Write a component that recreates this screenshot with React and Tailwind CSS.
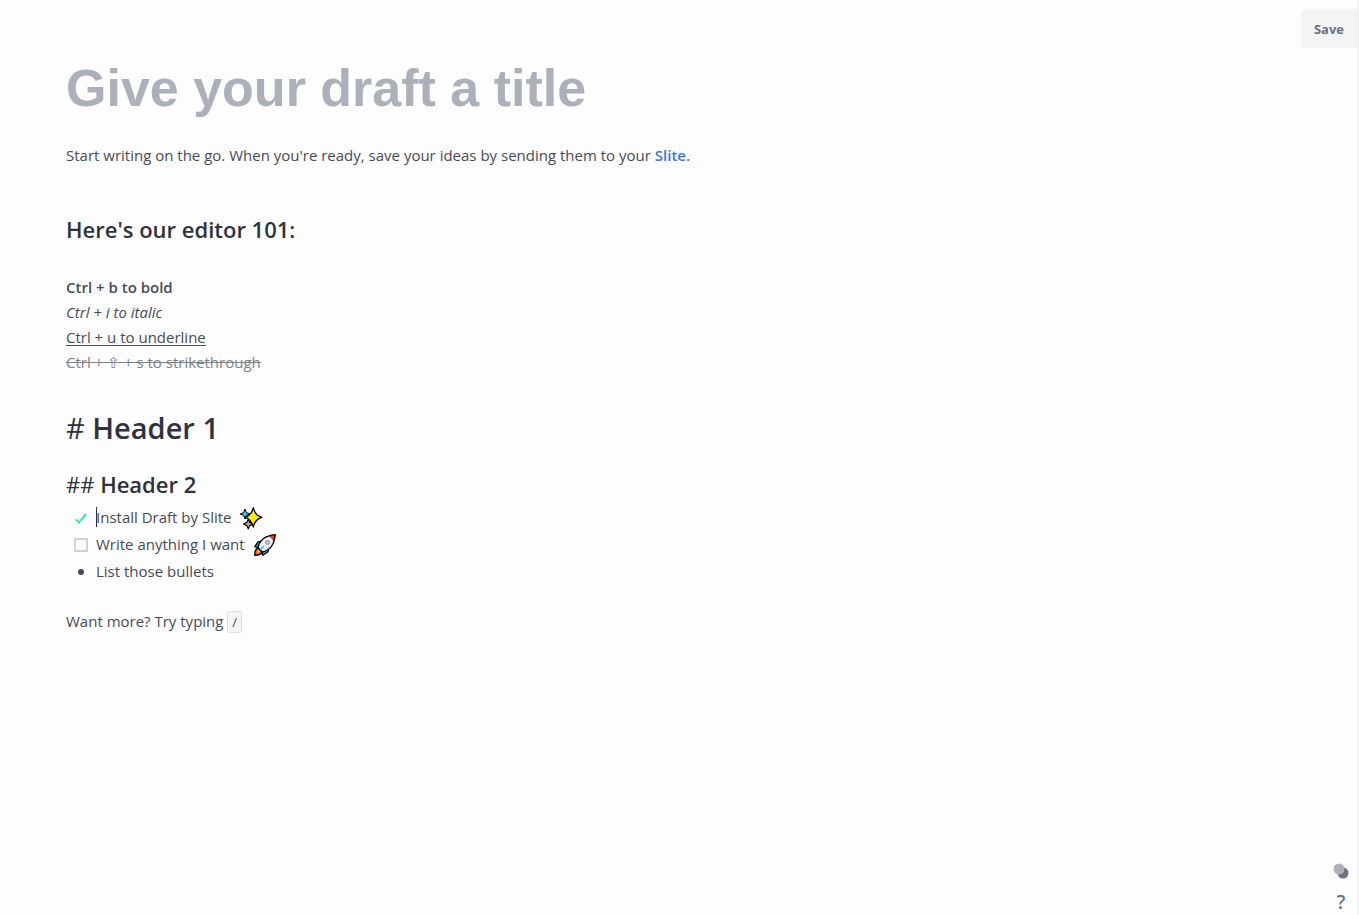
import React, { useState } from "react";

function Check() {
  return (
    <svg viewBox="0 0 14 14" className="pointer-events-none col-start-1 row-start-1 h-3.5 w-3.5" fill="none" aria-hidden="true">
      <path d="M1.8 8.4 5 11.6 12 3" stroke="#3fe0b4" strokeWidth="2" />
    </svg>
  );
}

function Sparkles() {
  return (
    <svg viewBox="0 0 24 24" className="h-6 w-6" stroke="#000" strokeLinejoin="round" aria-hidden="true">
      <path d="M6 3 7.4 6.6 11 8 7.4 9.4 6 13 4.6 9.4 1.2 8 4.6 6.6Z" fill="#38c6f0" strokeWidth="1" />
      <path d="M9.3 13.2 10.8 16.4 14 18 10.8 19.6 9.3 22.8 7.8 19.6 4.6 18 7.8 16.4Z" fill="#c9a795" strokeWidth="1.2" />
      <path d="M14.3 1.6 C15.4 7 17.6 9.9 22.8 11.3 C17.6 12.8 15.4 16 14.3 21 C13.1 16 10.8 12.8 6.2 11.3 C10.8 9.9 13.1 7 14.3 1.6Z" fill="#fff000" strokeWidth="1.3" />
    </svg>
  );
}

function Rocket() {
  return (
    <svg viewBox="0 0 24 24" className="h-6 w-6" stroke="#000" strokeWidth="1.3" strokeLinejoin="round" aria-hidden="true">
      <path d="M9.2 8.2 5 8.8 1.8 13.6 6.4 15Z" fill="#35b8df" />
      <path d="M15.8 14.8 15 18.8 9.8 22.2 8.8 17.6Z" fill="#35b8df" />
      <path d="M4.6 14.8 C2.4 16 1.7 19 1.7 22.3 C5 22.3 8 21.5 9.2 19.4Z" fill="#e54b22" />
      <path d="M5 16.5 3.5 20.5 7.5 19Z" fill="#ffd83b" stroke="none" />
      <path d="M5 14.6 C6.5 7.5 12 2.7 22.3 1.7 C21.3 12 16.6 17.5 9.4 19Z" fill="#e6edf2" stroke="none" />
      <path d="M14.8 3.3 C17.2 2.3 20 1.9 22.3 1.7 C22.1 4 21.7 7 20.7 9.2 C19.8 6.5 17.8 4.2 14.8 3.3Z" fill="#e23d22" stroke="none" />
      <path d="M5 14.6 C6.5 7.5 12 2.7 22.3 1.7 C21.3 12 16.6 17.5 9.4 19Z" fill="none" />
      <circle cx="14.5" cy="9.5" r="2" fill="#b9c4cb" stroke="#87939b" strokeWidth="1" />
      <path d="M7 17 11 13" stroke="#35b8df" />
    </svg>
  );
}

function Todo({ id, text, checked, onChange, caret, children }) {
  return (
    <li className="flex h-[27px] items-center">
      <span className="grid w-[30px] place-items-center">
        <input
          id={id}
          type="checkbox"
          checked={checked}
          onChange={onChange}
          className="col-start-1 row-start-1 h-3.5 w-3.5 appearance-none border-2 border-[#d0d3d8] checked:border-transparent"
        />
        {checked && <Check />}
      </span>
      <label htmlFor={id} className="relative flex items-center gap-2">
        {caret && <span className="absolute left-0 top-0.5 h-5 w-px bg-[#2f323c]" />}
        <span>{text}</span>
        {children}
      </label>
    </li>
  );
}

export default function App() {
  const [title, setTitle] = useState("");
  const [done, setDone] = useState({ install: true, write: false });
  const toggle = (key) => () => setDone((d) => ({ ...d, [key]: !d[key] }));

  return (
    <div className="flex min-h-screen border-r-2 border-[#f0f1f2] bg-[#fdfdfd] font-['Open_Sans','Noto_Sans',sans-serif] text-[15px] leading-[25px] text-[#484b55]">
      <main className="min-w-0 flex-1 pb-12 pl-[66px] pt-14">
        <input
          type="text"
          aria-label="Draft title"
          placeholder="Give your draft a title"
          value={title}
          onChange={(e) => setTitle(e.target.value)}
          className="block h-16 w-full bg-transparent font-['Liberation_Sans',Arial,sans-serif] text-[52px] font-bold text-[#2f323c] outline-none placeholder:text-[#abb0ba]"
        />
        <p className="mt-[23px]">
          Start writing on the go. When you're ready, save your ideas by sending them to your{" "}
          <a href="#slite" className="font-semibold text-[#3478ea]">Slite.</a>
        </p>
        <h2 className="mt-[45px] text-[22px] font-semibold leading-8 text-[#2f323c]">Here's our editor 101:</h2>
        <div className="mt-[30px]">
          <p><strong className="font-semibold">Ctrl + b to bold</strong></p>
          <p><em>Ctrl + i to italic</em></p>
          <p><u className="underline-offset-2">Ctrl + u to underline</u></p>
          <p className="text-[#7c828e]"><s>Ctrl + ⇧ + s to strikethrough</s></p>
        </div>
        <h1 className="mt-[33px] text-[29px] font-semibold leading-10 text-[#2f323c]">
          <span className="font-normal">#</span> Header 1
        </h1>
        <h2 className="mt-5 text-[22px] font-semibold leading-8 text-[#2f323c]">
          <span className="font-normal">##</span> Header 2
        </h2>
        <ul className="mt-1">
          <Todo id="install" text="Install Draft by Slite" checked={done.install} onChange={toggle("install")} caret>
            <Sparkles />
          </Todo>
          <Todo id="write" text="Write anything I want" checked={done.write} onChange={toggle("write")}>
            <Rocket />
          </Todo>
          <li className="flex h-[27px] items-center">
            <span className="grid w-[30px] place-items-center">
              <span className="h-1.5 w-1.5 rounded-full bg-[#484b55]" />
            </span>
            List those bullets
          </li>
        </ul>
        <p className="mt-6">
          Want more? Try typing{" "}
          <code className="inline-block h-[22px] rounded-xs border border-[#dcdee1] bg-[#f4f5f6] px-1 font-['Open_Sans',sans-serif] text-[13px] leading-5">/</code>
        </p>
      </main>
      <aside className="flex flex-col items-end justify-between pt-[9px]">
        <button type="button" className="h-[39px] rounded-l bg-[#f3f4f5] px-[13px] pt-px text-[13px] font-bold text-[#6b7180]">Save</button>
        <div className="flex flex-col items-center gap-2.5 pr-2">
          <button type="button" aria-label="Switch theme" className="h-4 w-4">
            <svg viewBox="0 0 16 16" className="h-4 w-4" aria-hidden="true">
              <circle cx="10" cy="10" r="5.5" fill="#6b7180" />
              <circle cx="6" cy="6" r="5.5" fill="#abb0ba" />
            </svg>
          </button>
          <button type="button" aria-label="Help" className="h-[26px] text-[19px] font-semibold leading-[26px] text-[#6b7180]">?</button>
        </div>
      </aside>
    </div>
  );
}
